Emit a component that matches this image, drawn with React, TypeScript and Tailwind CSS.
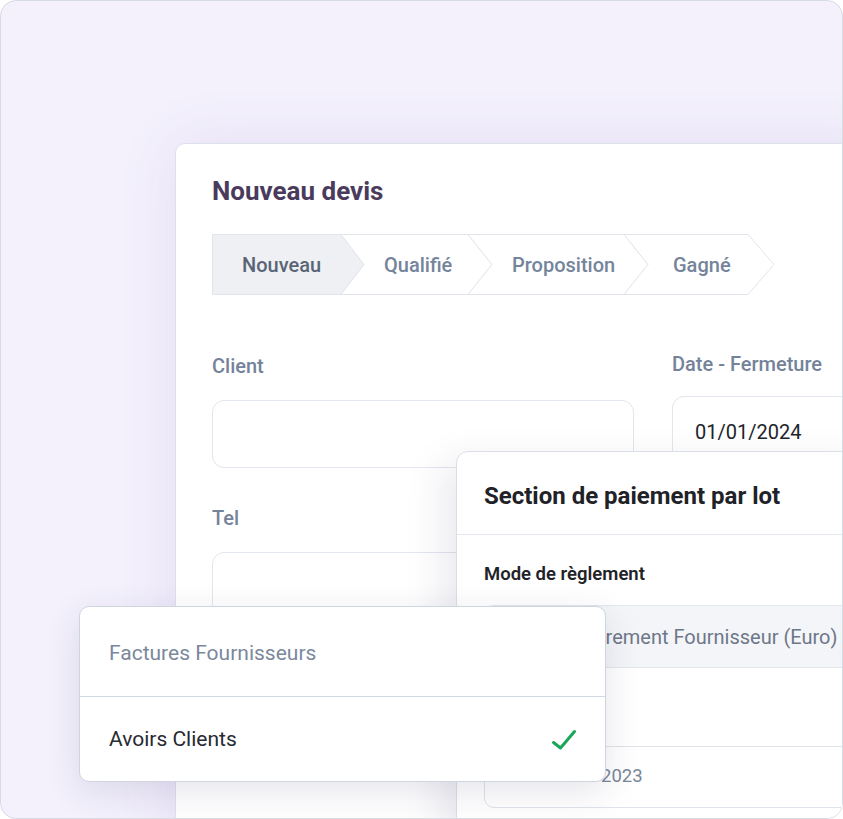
import React from "react";

const font = { fontFamily: "Roboto, 'Noto Sans', sans-serif" };

function Breadcrumb() {
  const stroke = "#e1e5eb";
  return (
    <div className="relative h-[61px] w-[563px]">
      <svg className="absolute inset-0" width="563" height="61" viewBox="0 0 563 61">
        <polygon points="0.5,0.5 129,0.5 152,30.5 129,60.5 0.5,60.5" fill="#eef0f3" stroke={stroke} strokeWidth="1" />
        <polygon points="129,0.5 256,0.5 280,30.5 256,60.5 129,60.5 152,30.5" fill="#ffffff" stroke={stroke} strokeWidth="1" />
        <polygon points="256,0.5 412,0.5 436,30.5 412,60.5 256,60.5 280,30.5" fill="#ffffff" stroke={stroke} strokeWidth="1" />
        <polygon points="412,0.5 536,0.5 562,30.5 536,60.5 412,60.5 436,30.5" fill="#ffffff" stroke={stroke} strokeWidth="1" />
      </svg>
      <div className="relative flex h-full items-center text-[20px] font-medium">
        <div className="w-[152px] pl-[30px] text-[#5a6477]">Nouveau</div>
        <div className="w-[128px] pl-[20px] text-[#74849b]">Qualifié</div>
        <div className="w-[156px] pl-[20px] text-[#74849b]">Proposition</div>
        <div className="w-[126px] pl-[25px] text-[#74849b]">Gagné</div>
      </div>
    </div>
  );
}

export default function App() {
  return (
    <div className="bg-white" style={font}>
      <div className="relative h-[819px] w-[843px] overflow-hidden rounded-[16px] border border-[#d7dbe4] bg-[#f4f1fd] pl-[174px] pt-[142px]">
        {/* Main card */}
        <div className="h-[720px] w-[720px] rounded-tl-[10px] border border-[#dde1e9] bg-white pl-[36px] pt-[32px] shadow-[0_0_60px_rgba(90,60,160,0.10)]">
          <h1 className="text-[26px] leading-[30px] font-bold text-[#4a3b5c]">Nouveau devis</h1>
          <div className="mt-[28px]">
            <Breadcrumb />
          </div>
          <div className="mt-[59px] grid grid-cols-[422px_300px] gap-x-[38px]">
            <div>
              <div className="text-[20px] leading-[24px] font-medium text-[#74829a]">Client</div>
              <div className="mt-[22px] h-[68px] rounded-[12px] border border-[#e2e6ed] bg-white" />
            </div>
            <div className="-mt-[2px]">
              <div className="text-[20px] leading-[24px] font-medium text-[#74829a]">Date - Fermeture</div>
              <div className="mt-[20px] flex h-[68px] items-center rounded-[12px] border border-[#e2e6ed] bg-white pl-[22px] pt-[4px] text-[20px] text-[#22252b]">
                01/01/2024
              </div>
            </div>
            <div className="mt-[38px]">
              <div className="text-[20px] leading-[24px] font-medium text-[#74829a]">Tel</div>
              <div className="mt-[22px] h-[68px] rounded-[12px] border border-[#e2e6ed] bg-white" />
            </div>
          </div>
        </div>

        {/* Payment section panel */}
        <div className="absolute left-[455px] top-[450px] h-[400px] w-[420px] overflow-hidden rounded-tl-[12px] border border-[#d9dee7] bg-white shadow-[-12px_12px_40px_rgba(40,30,80,0.10)]">
          <div className="border-b border-[#e3e7ee] pb-[24px] pl-[27px] pt-[30px]">
            <div className="text-[24px] leading-[28px] font-bold text-[#1f2328]">Section de paiement par lot</div>
          </div>
          <div className="pl-[27px] pt-[28px]">
            <div className="text-[18.5px] leading-[22px] font-semibold text-[#1f2328]">Mode de règlement</div>
            <div className="mt-[20px] flex h-[63px] w-[420px] items-center rounded-[10px] border border-[#e3e7ee] bg-[#f4f5f8] pl-[103px] text-[20px] whitespace-nowrap text-[#6d7789]">
              Virement Fournisseur (Euro)
            </div>
            <div className="mt-[78px] flex h-[62px] w-[420px] items-center rounded-[10px] border border-[#dfe3ea] bg-white pl-[26px] text-[18.5px] whitespace-nowrap text-[#7a8699]">
              01 Janvier 2023
            </div>
          </div>
        </div>

        {/* Dropdown */}
        <div className="absolute left-[78px] top-[605px] w-[527px] overflow-hidden rounded-[10px] border border-[#cdd5e1] bg-white shadow-[0_10px_36px_rgba(40,30,80,0.12)]">
          <div className="flex h-[90px] items-center border-b border-[#d3d9e4] pl-[29px] pt-[5px] text-[21px] text-[#7b889c]">
            Factures Fournisseurs
          </div>
          <div className="flex h-[84px] items-center justify-between pl-[29px] pr-[28px] pt-[2px] text-[21px] text-[#272a30]">
            <span>Avoirs Clients</span>
            <svg width="26" height="22" viewBox="0 0 26 22" fill="none">
              <polyline points="2.5,13.5 9.5,19 23.5,2.5" stroke="#1aa659" strokeWidth="3" strokeLinecap="round" strokeLinejoin="round" />
            </svg>
          </div>
        </div>
      </div>
    </div>
  );
}
